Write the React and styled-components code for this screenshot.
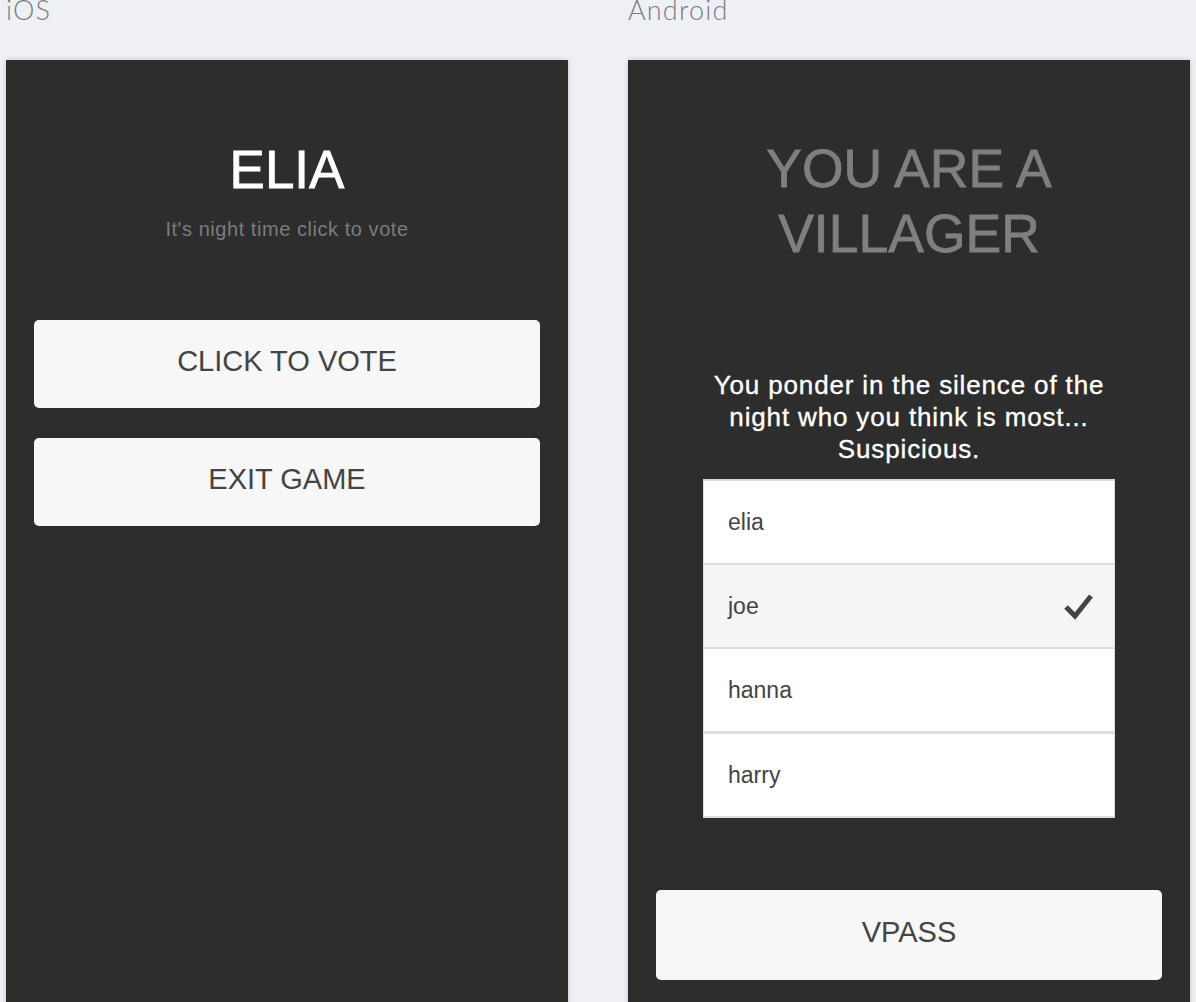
import React from 'react';
import styled, { createGlobalStyle } from 'styled-components';

const GlobalStyle = createGlobalStyle`
  html, body {
    margin: 0;
    padding: 0;
    background: #eff0f4;
    overflow: hidden;
  }
  body {
    font-family: "Liberation Sans", Arial, sans-serif;
  }
`;

const Page = styled.div`
  display: grid;
  grid-template-columns: 562px 562px;
  column-gap: 60px;
  padding: 0 6px;
  height: 1002px;
  overflow: hidden;
`;

const Column = styled.section`
  display: flex;
  flex-direction: column;
`;

const PlatformLabel = styled.div`
  font-family: Lato, "Open Sans", sans-serif;
  font-weight: 300;
  font-size: 27px;
  line-height: 30px;
  letter-spacing: 1.2px;
  color: #777c8a;
  margin-top: -5px;
  height: 65px;
  flex-shrink: 0;
`;

const Screen = styled.div`
  flex: 1;
  min-height: 960px;
  background: #2d2d2d;
  box-shadow: 0 0 5px rgba(0, 0, 0, 0.18);
  display: flex;
  flex-direction: column;
  align-items: center;
  padding-top: ${(p) => p.$top}px;
  box-sizing: border-box;
`;

const Title = styled.h1`
  margin: 0;
  font-family: "Liberation Sans", Arial, sans-serif;
  font-weight: 400;
  font-size: ${(p) => p.$size}px;
  line-height: ${(p) => p.$lh}px;
  color: ${(p) => (p.$muted ? '#7f7f7f' : '#ffffff')};
  -webkit-text-stroke: 0.8px ${(p) => (p.$muted ? '#7f7f7f' : '#ffffff')};
  text-align: center;
  max-width: 412px;
`;

const Subtitle = styled.p`
  margin: 15px 0 0;
  font-size: 20px;
  line-height: 24px;
  letter-spacing: 0.55px;
  color: #7c7c7c;
  text-align: center;
`;

const ButtonStack = styled.div`
  margin-top: ${(p) => p.$top}px;
  width: 506px;
  display: flex;
  flex-direction: column;
  gap: 30px;
`;

const ActionButton = styled.button`
  height: ${(p) => p.$h || 88}px;
  width: 100%;
  border: none;
  border-radius: 5px;
  background: #f7f7f7;
  color: #444444;
  font-family: "Liberation Sans", Arial, sans-serif;
  font-size: 29px;
  display: flex;
  align-items: center;
  justify-content: center;
  padding: 0 0 5px;
  cursor: pointer;
`;

const Prompt = styled.p`
  margin: 103px 0 0;
  max-width: 412px;
  font-size: 26px;
  line-height: 32px;
  letter-spacing: 0.85px;
  color: #ffffff;
  -webkit-text-stroke: 0.35px #ffffff;
  text-align: center;
`;

const PlayerList = styled.ul`
  list-style: none;
  margin: 14px 0 0;
  padding: 0;
  width: 412px;
  box-sizing: border-box;
  border-top: 2px solid #dcdcdc;
  border-left: 1px solid #dcdcdc;
  border-right: 1px solid #dcdcdc;
`;

const PlayerRow = styled.li`
  height: ${(p) => (p.$thick ? 85 : 84)}px;
  border-bottom: ${(p) => (p.$thick ? 3 : 2)}px solid #dcdcdc;
  background: ${(p) => (p.$selected ? '#f5f5f5' : '#ffffff')};
  display: flex;
  align-items: center;
  justify-content: space-between;
  padding: 0 21px 0 24px;
  box-sizing: border-box;
  font-size: 23px;
  color: #444444;
`;

const CheckIcon = () => (
  <svg width="30" height="28" viewBox="0 0 30 28" aria-hidden="true">
    <polyline
      points="3,15 12,24 28,4"
      fill="none"
      stroke="#444444"
      strokeWidth="5"
      strokeLinejoin="miter"
    />
  </svg>
);

const players = [
  { name: 'elia' },
  { name: 'joe', selected: true },
  { name: 'hanna', thick: true },
  { name: 'harry' },
];

export default function App() {
  return (
    <>
      <GlobalStyle />
      <Page>
        <Column>
          <PlatformLabel>iOS</PlatformLabel>
          <Screen $top={78}>
            <Title $size={53} $lh={64}>ELIA</Title>
            <Subtitle>It's night time click to vote</Subtitle>
            <ButtonStack $top={79}>
              <ActionButton>CLICK TO VOTE</ActionButton>
              <ActionButton>EXIT GAME</ActionButton>
            </ButtonStack>
          </Screen>
        </Column>
        <Column>
          <PlatformLabel>Android</PlatformLabel>
          <Screen $top={76}>
            <Title $muted $size={53.5} $lh={65}>YOU ARE A VILLAGER</Title>
            <Prompt>
              You ponder in the silence of the night who you think is most... Suspicious.
            </Prompt>
            <PlayerList>
              {players.map((p) => (
                <PlayerRow key={p.name} $selected={p.selected} $thick={p.thick}>
                  {p.name}
                  {p.selected && <CheckIcon />}
                </PlayerRow>
              ))}
            </PlayerList>
            <ButtonStack $top={72}>
              <ActionButton $h={90}>VPASS</ActionButton>
            </ButtonStack>
          </Screen>
        </Column>
      </Page>
    </>
  );
}
